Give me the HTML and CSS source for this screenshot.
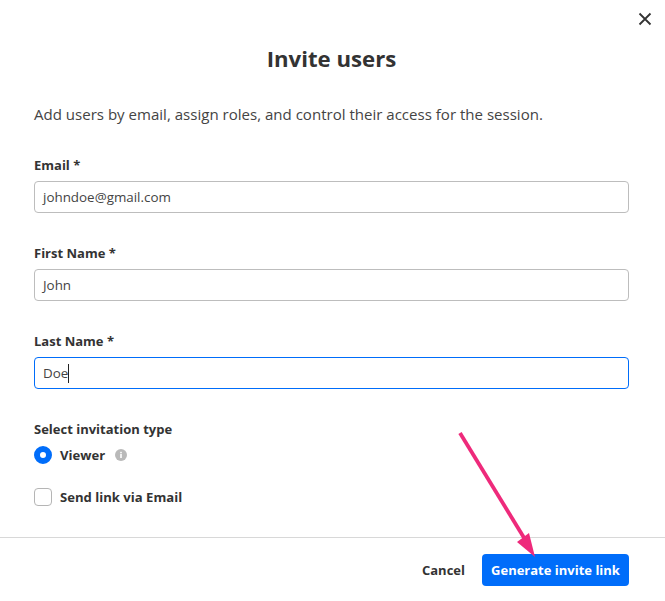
FILE: index.html
```html
<!DOCTYPE html>
<html lang="en">
<head>
<meta charset="utf-8">
<title>Invite users</title>
<link rel="stylesheet" href="styles.css">
</head>
<body>
<div class="dialog">
  <div class="close-row">
    <svg class="close" width="14" height="14" viewBox="0 0 14 14"><path d="M1.5 1.5l11 11M12.5 1.5l-11 11" stroke="#333" stroke-width="1.8" fill="none"/></svg>
  </div>
  <h1 class="title">Invite users</h1>
  <p class="intro">Add users by email, assign roles, and control their access for the session.</p>
  <div class="fields">
    <div class="field">
      <div class="label">Email *</div>
      <div class="input">johndoe@gmail.com</div>
    </div>
    <div class="field">
      <div class="label">First Name *</div>
      <div class="input">John</div>
    </div>
    <div class="field">
      <div class="label">Last Name *</div>
      <div class="input focused">Doe<span class="caret"></span></div>
    </div>
  </div>
  <div class="label type-label">Select invitation type</div>
  <div class="option">
    <span class="radio"></span>
    <span class="option-text">Viewer</span>
    <svg class="info" width="12" height="12" viewBox="0 0 12 12"><circle cx="6" cy="6" r="6" fill="#b9b9b9"/><rect x="5.2" y="5" width="1.6" height="4" fill="#fff"/><rect x="5.2" y="2.8" width="1.6" height="1.5" fill="#fff"/></svg>
  </div>
  <div class="option send">
    <span class="checkbox"></span>
    <span class="option-text">Send link via Email</span>
  </div>
  <div class="footer">
    <span class="cancel">Cancel</span>
    <span class="primary">Generate invite link</span>
  </div>
</div>
<svg class="arrow" width="665" height="601" viewBox="0 0 665 601"><path d="M460 433L526 541" stroke="#ee2a7b" stroke-width="3.8" fill="none"/><path d="M535 557L517 542L529 533Z" fill="#ee2a7b"/></svg>
</body>
</html>
```
FILE: styles.css
```css
* { box-sizing: border-box; }
html, body { margin: 0; padding: 0; background: #fff; }
body {
  width: 665px;
  height: 601px;
  overflow: hidden;
  position: relative;
  font-family: "Open Sans", "Noto Sans", sans-serif;
  color: #333;
}
.dialog { display: flex; flex-direction: column; height: 601px; }
.close-row { display: flex; justify-content: flex-end; padding: 12px 13px 0 0; height: 26px; }
.title { margin: 17px 2px 0 0; font-size: 22.2px; line-height: 32px; font-weight: 700; text-align: center; color: #333; }
.intro { margin: 29px 34px 0; font-size: 15.05px; line-height: 20px; color: #444; }
.fields { display: flex; flex-direction: column; gap: 31px; margin: 32px 36px 0 34px; }
.label { font-size: 13px; line-height: 18px; font-weight: 700; color: #333; }
.input {
  margin-top: 7px;
  height: 32px;
  border: 1px solid #bdbdbd;
  border-radius: 4px;
  padding: 0 8px;
  font-size: 13.4px;
  line-height: 30px;
  color: #444;
  display: flex;
  align-items: center;
}
.input.focused { border-color: #006dfa; }
.caret { display: inline-block; width: 1px; height: 19px; background: #222; }
.type-label { margin: 31px 0 0 34px; }
.option { display: flex; align-items: center; margin: 7px 0 0 34px; height: 20px; }
.radio { width: 18px; height: 18px; border-radius: 50%; border: 6px solid #006dfa; background: #fff; }
.checkbox { width: 18px; height: 18px; border-radius: 4px; border: 1px solid #b5b5b5; background: #fff; }
.option-text { margin-left: 8px; font-size: 13.1px; font-weight: 700; color: #333; }
.info { margin-left: 10px; }
.send { margin-top: 22px; }
.footer {
  margin-top: auto;
  height: 64px;
  border-top: 1px solid #d8d8d8;
  display: flex;
  align-items: flex-start;
  justify-content: flex-end;
  gap: 17px;
  padding: 16px 36px 0 0;
}
.cancel { font-size: 13px; font-weight: 700; line-height: 32px; color: #333; }
.primary { height: 32px; width: 147px; border-radius: 4px; background: #006dfa; color: #fff; font-size: 13px; font-weight: 700; line-height: 32px; text-align: center; }
.arrow { position: absolute; left: 0; top: 0; pointer-events: none; }
```
